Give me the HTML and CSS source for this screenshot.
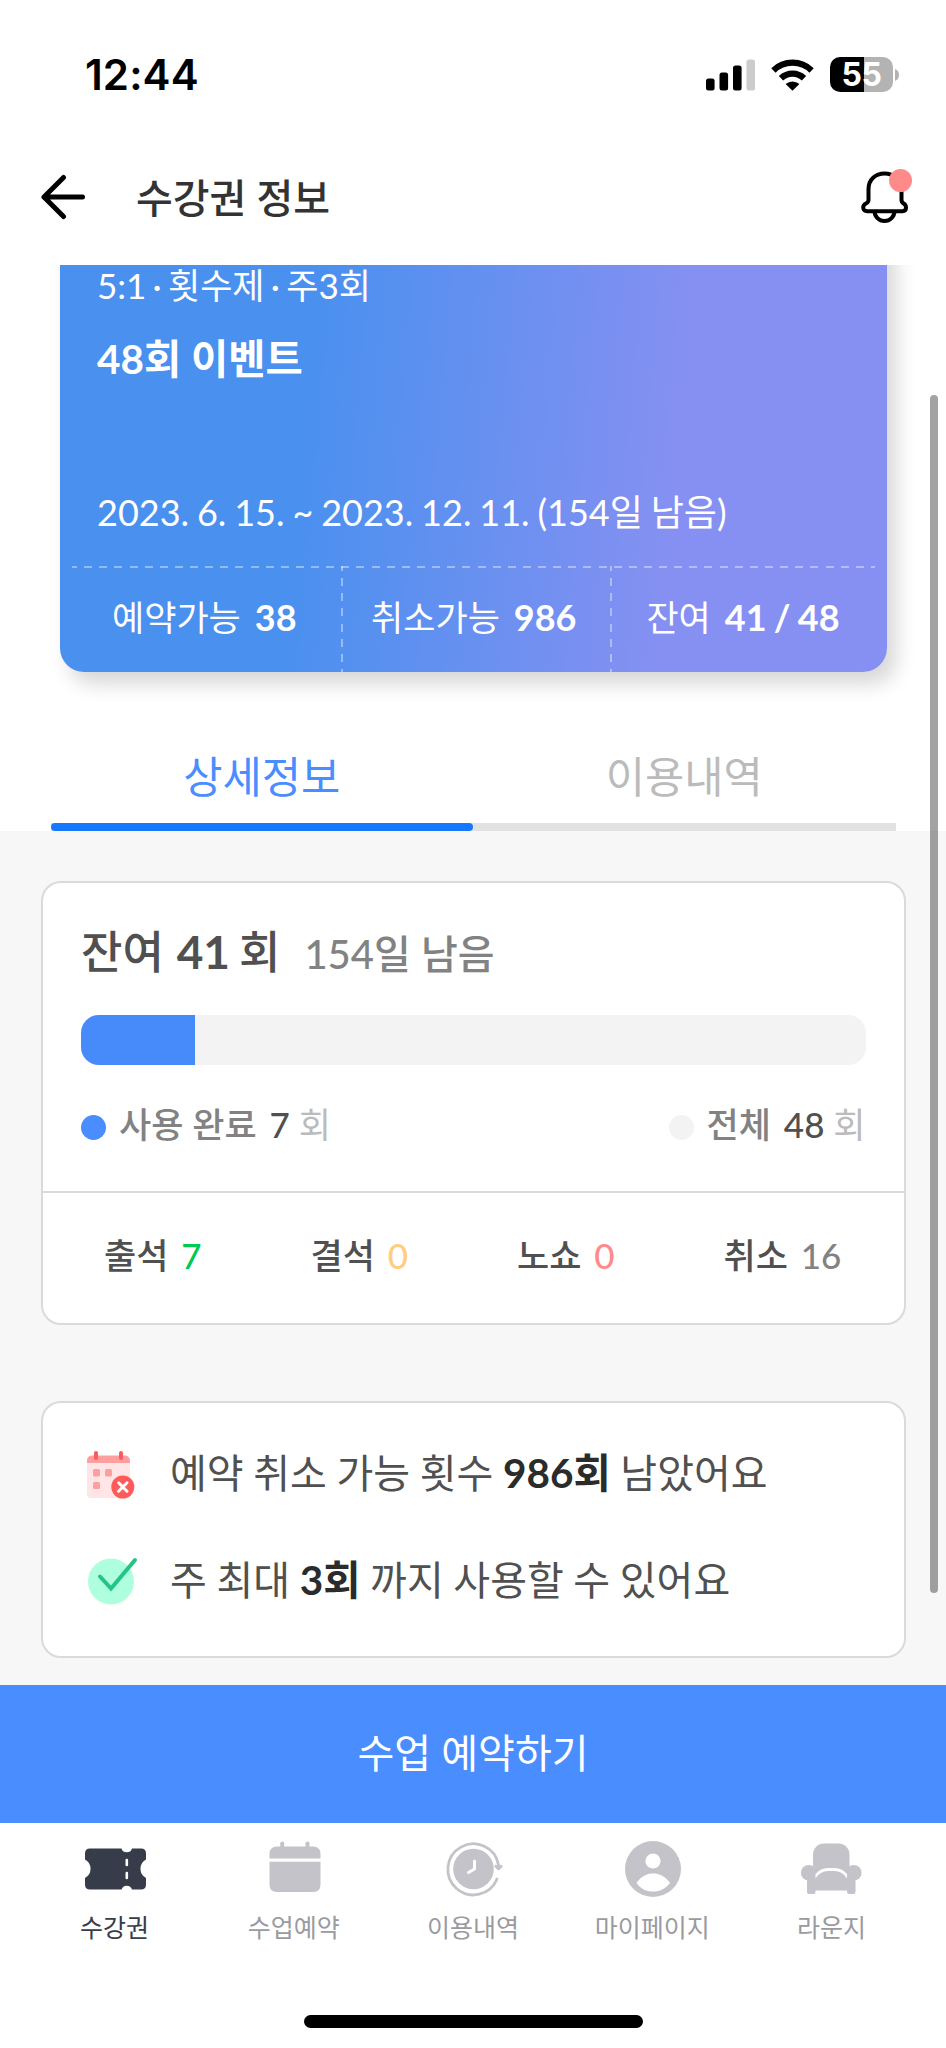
FILE: index.html
```html
<!DOCTYPE html>
<html lang="ko">
<head>
    <meta charset="UTF-8">
    <meta name="viewport" content="width=device-width, initial-scale=1.0">
    <title>수강권 정보</title>
    <link rel="stylesheet" href="styles.css">
</head>
<body>
    <div class="app">
        <div class="status-bar">
            <div class="time">12:44</div>
            <div class="status-icons">
                <svg class="signal" width="49" height="32" viewBox="0 0 49 32">
                    <rect x="0" y="19.5" width="8.6" height="12" rx="2.5"/>
                    <rect x="13.5" y="13.5" width="8.6" height="18" rx="2.5"/>
                    <rect x="27" y="6.5" width="8.6" height="25" rx="2.5"/>
                    <rect x="40.5" y="0.5" width="8.6" height="31" rx="2.5" fill="#ccc"/>
                </svg>
                <svg class="wifi" width="43" height="32" viewBox="0 0 43 32">
                    <path d="M2.4 11.4 A27.500 27.500 0 0 1 40.600 11.4" fill="none" stroke="#000" stroke-width="6.200"/>
                    <path d="M10 19.2 A16.5 16.5 0 0 1 33 19.2" fill="none" stroke="#000" stroke-width="6.200"/>
                    <path d="M14.6 25 A10.5 10.5 0 0 1 28.4 25 L21.5 31.8 Z"/>
                </svg>
                <div class="battery">55</div>
                <svg class="battery-tip" width="4" height="12" viewBox="0 0 4 12">
                    <path d="M0 0 A6.5 6.5 0 0 1 0 12 Z" fill="#b3b3b3"/>
                </svg>
            </div>
        </div>

        <div class="header">
            <svg class="back" width="46" height="46" viewBox="0 0 46 46">
                <path d="M23.5 3.5 L4 23 L23.5 42.5 M4 23 H42.5" fill="none" stroke="#000" stroke-width="5" stroke-linecap="round" stroke-linejoin="round"/>
            </svg>
            <h1 class="header-title">수강권 정보</h1>
            <div class="bell">
                <svg width="48" height="54" viewBox="0 0 48 54">
                    <path d="M7.5 19 C7.5 9.5 14.5 3.5 23.5 3.5 S40.5 9.5 40.5 19 V30 C40.5 34.5 45 32.5 45 37.5 C45 40 43.5 41.2 41.5 41.2 H6 C4 41.2 2.2 40 2.2 37.5 C2.2 32.5 7.5 34.5 7.5 30 Z" fill="none" stroke="#000" stroke-width="4"/>
                    <path d="M13.5 41 A10 10 0 0 0 33.5 41" fill="none" stroke="#000" stroke-width="4"/>
                </svg>
                <span class="bell-dot"></span>
            </div>
        </div>

        <div class="content">
            <div class="top">
                <div class="ticket">
                    <div class="ticket-type">5:1 · 횟수제 · 주3회</div>
                    <div class="ticket-name">48회 이벤트</div>
                    <div class="ticket-period">2023. 6. 15. ~ 2023. 12. 11. (154일 남음)</div>
                    <div class="ticket-counts">
                        <div class="count">예약가능 <b>38</b></div>
                        <div class="count">취소가능 <b>986</b></div>
                        <div class="count">잔여 <b>41 / 48</b></div>
                    </div>
                </div>
                <div class="tabs">
                    <div class="tab active">상세정보</div>
                    <div class="tab">이용내역</div>
                </div>
            </div>

            <div class="card usage">
                <div class="usage-title">
                    <span class="remain">잔여 <b>41</b> 회</span>
                    <span class="days">154일 남음</span>
                </div>
                <div class="progress">
                    <div class="progress-bar" style="width: 14.58%"></div>
                </div>
                <div class="legend">
                    <div class="legend-item"><i class="dot used"></i>사용 완료 <b>7</b> <em>회</em></div>
                    <div class="legend-item"><i class="dot"></i>전체 <b>48</b> <em>회</em></div>
                </div>
                <div class="attendance">
                    <div>출석 <span class="green">7</span></div>
                    <div>결석 <span class="yellow">0</span></div>
                    <div>노쇼 <span class="red">0</span></div>
                    <div>취소 <span class="gray">16</span></div>
                </div>
            </div>

            <div class="card notice">
                <div class="notice-row">
                    <svg width="52" height="52" viewBox="0 -2 52 52">
                        <path d="M1 11 H44 V44 Q44 48 40 48 H5 Q1 48 1 44 Z" fill="#ffe5e5"/>
                        <path d="M1 13 V11 Q1 5.500 6.500 5.500 H38.500 Q44 5.500 44 11 V13 Z" fill="#ff9e9e"/>
                        <path d="M10 3 V8 M35 3 V8" stroke="#ff5a5a" stroke-width="4" stroke-linecap="round"/>
                        <rect x="7" y="19" width="7" height="7.500" rx="1.500" fill="#ff9e9e"/>
                        <rect x="19" y="19" width="7" height="7.500" rx="1.500" fill="#ff9e9e"/>
                        <rect x="7" y="32" width="7" height="7" rx="1.500" fill="#ff9e9e"/>
                        <circle cx="36.800" cy="37" r="11.500" fill="#ff5a5a"/>
                        <path d="M32.600 32.800 L41 41.200 M41 32.800 L32.600 41.200" stroke="#fff" stroke-width="3" stroke-linecap="round"/>
                    </svg>
                    <p>예약 취소 가능 횟수 <b>986회</b> 남았어요</p>
                </div>
                <div class="notice-row">
                    <svg width="52" height="52" viewBox="0 -1 52 52">
                        <circle cx="25" cy="25.500" r="23" fill="#adffdd"/>
                        <path d="M14 20.500 L25 32.500 L49 4" fill="none" stroke="#22c583" stroke-width="4" stroke-linecap="round"/>
                    </svg>
                    <p>주 최대 <b>3회</b> 까지 사용할 수 있어요</p>
                </div>
            </div>
            <div class="scrollbar"></div>
        </div>

        <button class="reserve">수업 예약하기</button>

        <div class="nav">
            <div class="nav-item active">
                <svg width="64" height="60" viewBox="-2 0 64 60">
                    <path d="M5 9.500 H36.500 A5.500 5.500 0 0 0 47 9.500 H56 Q61 9.500 61 14.500 V20.500 A10.500 10.500 0 0 0 61 39 V45.500 Q61 50.500 56 50.500 H47 A5.500 5.500 0 0 0 36.500 50.500 H5 Q0 50.500 0 45.500 V39 A10.500 10.500 0 0 0 0 20.500 V14.500 Q0 9.500 5 9.500 Z" fill="#363c49"/>
                    <path d="M41.800 21 V26 M41.800 34 V39" stroke="#fff" stroke-width="2.600" stroke-linecap="round"/>
                </svg>
                <span>수강권</span>
            </div>
            <div class="nav-item">
                <svg width="62" height="60" viewBox="0 0 62 60">
                    <path d="M6.500 19.500 V15 Q6.500 7.500 14 7.500 H50 Q57.500 7.500 57.500 15 V19.500 Z M6.500 22.800 H57.500 V45.500 Q57.500 53 50 53 H14 Q6.500 53 6.500 45.500 Z" fill="#c4c3c9"/>
                    <path d="M19.200 4.500 V10 M44.500 4.500 V10" stroke="#c4c3c9" stroke-width="4" stroke-linecap="round"/>
                </svg>
                <span>수업예약</span>
            </div>
            <div class="nav-item">
                <svg width="62" height="60" viewBox="0 0 62 60">
                    <circle cx="31.500" cy="30" r="20.300" fill="#c4c3c9"/>
                    <path d="M55 40 A25.500 25.500 0 1 1 56.500 26" fill="none" stroke="#c4c3c9" stroke-width="2.800" stroke-linecap="round"/>
                    <path d="M53 26.500 L56.500 30 L60 26.500" fill="#c4c3c9" stroke="#c4c3c9" stroke-width="2.500" stroke-linejoin="round"/>
                    <path d="M32.500 22 V30 L26.500 33.500" fill="none" stroke="#fff" stroke-width="3" stroke-linecap="round" stroke-linejoin="round"/>
                </svg>
                <span>이용내역</span>
            </div>
            <div class="nav-item">
                <svg width="62" height="60" viewBox="0 0 62 60">
                    <circle cx="32" cy="30" r="28" fill="#c4c3c9"/>
                    <circle cx="32" cy="22" r="7.600" fill="#fff"/>
                    <path d="M15.500 44 C20.500 37 25.500 34.500 32 34.500 S44 37 49 44 C44.500 50 38.500 52.500 32 52.500 S19.500 50 15.500 44 Z" fill="#fff"/>
                </svg>
                <span>마이페이지</span>
            </div>
            <div class="nav-item">
                <svg width="64" height="60" viewBox="-1 0 64 60">
                    <g fill="#c4c3c9">
                        <rect x="13" y="4.500" width="36.500" height="40" rx="11"/>
                        <circle cx="8.700" cy="33.700" r="7.800"/>
                        <circle cx="53.800" cy="33.700" r="7.800"/>
                        <path d="M7 33 H55.500 V53 Q55.500 55 53.500 55 H49 Q47 55 47 53 V51.500 H15.500 V53 Q15.500 55 13.500 55 H9 Q7 55 7 53 Z"/>
                    </g>
                    <path d="M15.500 39.500 V35 Q20.500 29 28 29 H34.500 Q42 29 47 35 V39.500 Q42.500 32 34.500 32 H28 Q20 32 15.500 39.500 Z" fill="#fff"/>
                </svg>
                <span>라운지</span>
            </div>
        </div>
        <div class="home-indicator"></div>
    </div>
</body>
</html>
```
FILE: styles.css
```css
* {
    box-sizing: border-box;
}

body {
    margin: 0;
    font-family: Lato, "Noto Sans CJK KR", sans-serif;
    background: #fff;
}

svg {
    display: block;
    flex-shrink: 0;
}

.app {
    width: 946px;
    height: 2048px;
    display: flex;
    flex-direction: column;
    overflow: hidden;
}

/* 상태바 */
.status-bar {
    height: 149px;
    padding: 0 47px 0 85px;
    display: flex;
    justify-content: space-between;
    align-items: center;
}

.time {
    font-family: Inter, sans-serif;
    font-size: 42px;
    font-weight: 600;
    letter-spacing: 0.1px;
    line-height: 50px;
}

.status-icons {
    display: flex;
    align-items: center;
}

.wifi {
    margin: 0 16px 0 16px;
}

.battery {
    width: 63px;
    height: 35px;
    border-radius: 10px;
    background: linear-gradient(90deg, #000 54.5%, #b3b3b3 54.5%);
    color: #fff;
    font-family: Inter, sans-serif;
    font-size: 32px;
    font-weight: 700;
    letter-spacing: -0.5px;
    line-height: 36px;
    text-align: center;
}

.battery-tip {
    margin-left: 2px;
}

/* 헤더 */
.header {
    height: 116px;
    padding: 0 37px 20px 40px;
    display: flex;
    align-items: center;
}

.header-title {
    flex: 1;
    margin: 0 0 0 50px;
    font-size: 40px;
    font-weight: 500;
    line-height: 62px;
    padding-top: 2px;
    color: #333;
}

.bell {
    position: relative;
}

.bell-dot {
    position: absolute;
    top: -1px;
    right: -3px;
    width: 23px;
    height: 23px;
    border-radius: 50%;
    background: #ff8a8a;
}

.content {
    position: relative;
    height: 1420px;
    overflow: hidden;
    background: #f7f7f7;
}

.top {
    background: #fff;
    height: 566px;
    display: flex;
    flex-direction: column;
    justify-content: space-between;
}

/* 수강권 카드 */
.ticket {
    width: 827px;
    height: 447px;
    margin: -40px 0 0 60px;
    padding-top: 41px;
    border-radius: 24px;
    background: linear-gradient(95deg, #4a90ef 30%, #8690f2 74%);
    box-shadow: 9px 12px 20px rgba(0, 0, 0, 0.16);
    color: #fff;
}

.ticket-type,
.ticket-name,
.ticket-period {
    padding-left: 37px;
    line-height: 50px;
    white-space: nowrap;
}

.ticket-type {
    font-size: 35px;
    line-height: 38px;
    word-spacing: -2.7px;
}

.ticket-name {
    margin-top: 30px;
    font-size: 40.5px;
    font-weight: 700;
}

.ticket-period {
    margin-top: 103px;
    font-size: 36px;
    word-spacing: -1.3px;
}

.ticket-counts {
    height: 106px;
    margin: 29px 12px 0;
    display: grid;
    grid-template-columns: 268.5px 269.5px 1fr;
    background: repeating-linear-gradient(90deg, rgba(255, 255, 255, 0.4) 0 5px, transparent 5px 12.13px, rgba(255, 255, 255, 0.4) 12.13px 15.13px) 0 0 / 100% 2px no-repeat;
}

.count {
    padding-right: 4px;
    font-size: 35px;
    line-height: 102px;
    text-align: center;
    white-space: nowrap;
}

.count + .count {
    padding-right: 3px;
    background: repeating-linear-gradient(180deg, rgba(255, 255, 255, 0.4) 0 5px, transparent 5px 12.13px, rgba(255, 255, 255, 0.4) 12.13px 15.13px) 0 0 / 2px 100% no-repeat;
}

.count:last-child {
    padding: 0 0 0 1px;
}

.count b {
    margin-left: 5px;
    font-size: 36px;
    font-weight: 700;
    word-spacing: -1.5px;
}

/* 탭 */
.tabs {
    margin: 0 50.5px;
    display: flex;
    background: linear-gradient(#e2e2e2, #e2e2e2) 0 100% / 100% 8px no-repeat;
}

.tab {
    flex: 1;
    height: 90px;
    font-size: 42.7px;
    line-height: 71px;
    text-align: center;
    color: #bbb;
}

.tab.active {
    color: #4a8dff;
}

.tab.active::after {
    content: "";
    display: block;
    height: 8px;
    margin-top: 11px;
    border-radius: 4px;
    background: #1677ff;
}

.card {
    width: 865px;
    margin-left: 40.5px;
    border: 2.5px solid #dadada;
    border-radius: 20px;
    background: #fff;
}

/* 이용 현황 */
.usage {
    height: 444px;
    margin-top: 50px;
}

.usage-title {
    height: 132px;
    padding: 0 38.5px;
    line-height: 138px;
    white-space: nowrap;
}

.remain {
    font-size: 45px;
    font-weight: 500;
    word-spacing: -2.5px;
    color: #505050;
}

.remain b {
    margin-left: 4px;
    font-size: 46px;
    font-weight: 700;
}

.days {
    margin-left: 20px;
    font-size: 40px;
    font-weight: 500;
    color: #828282;
}

.progress {
    height: 50px;
    margin: 0 38px 0 38.5px;
    border-radius: 18px;
    background: #f3f3f3;
    overflow: hidden;
}

.progress-bar {
    height: 100%;
    background: #478af9;
}

.legend {
    height: 126px;
    padding: 0 38px 0 38.5px;
    display: flex;
    justify-content: space-between;
    font-size: 35px;
    font-weight: 500;
    line-height: 119px;
    color: #828282;
}

.legend-item {
    white-space: pre;
}

.legend b {
    margin-left: 4px;
    font-weight: 500;
    color: #505050;
}

.legend em {
    font-style: normal;
    font-weight: 400;
    color: #bbb;
}

.dot {
    display: inline-block;
    width: 25px;
    height: 25px;
    margin-right: 13px;
    border-radius: 50%;
    background: #f3f3f3;
    vertical-align: -2px;
}

.dot.used {
    background: #4a8dff;
}

.attendance {
    padding-left: 61.5px;
    border-top: 2px solid #dadada;
    display: grid;
    grid-template-columns: repeat(4, 206.5px);
    font-size: 35px;
    font-weight: 500;
    line-height: 125px;
    color: #505050;
}

.attendance span {
    margin-left: 4px;
}

.green {
    color: #00c853;
}

.yellow {
    color: #ffcd80;
}

.red {
    color: #ff8a8a;
}

.gray {
    color: #828282;
}

/* 안내 */
.notice {
    height: 257px;
    margin-top: 76px;
    padding: 45px 0 0 43.5px;
}

.notice-row {
    height: 107px;
    display: flex;
    align-items: flex-start;
    gap: 32px;
}

.notice p {
    margin: 0;
    font-size: 40px;
    line-height: 50px;
    word-spacing: -0.6px;
    color: #505050;
    white-space: nowrap;
}

.notice b {
    font-size: 40.5px;
    color: #2b2b2b;
}

.scrollbar {
    position: absolute;
    top: 130px;
    right: 8px;
    width: 8px;
    height: 1198px;
    border-radius: 4px;
    background: rgba(0, 0, 0, 0.36);
}

.reserve {
    height: 138px;
    padding: 0 0 2px;
    border: none;
    background: #4a8dff;
    color: #fff;
    font-family: inherit;
    font-size: 40px;
    line-height: 136px;
}

/* 하단 메뉴 */
.nav {
    height: 192px;
    padding: 16px 25px 0;
    display: flex;
}

.nav-item {
    flex: 1;
    display: flex;
    flex-direction: column;
    align-items: center;
    gap: 9px;
    font-size: 25px;
    line-height: 38px;
    color: #9a9a9f;
}

.nav-item.active {
    color: #363c49;
}

.home-indicator {
    width: 339px;
    height: 13px;
    margin: 0 auto;
    border-radius: 7px;
    background: #000;
}
```
